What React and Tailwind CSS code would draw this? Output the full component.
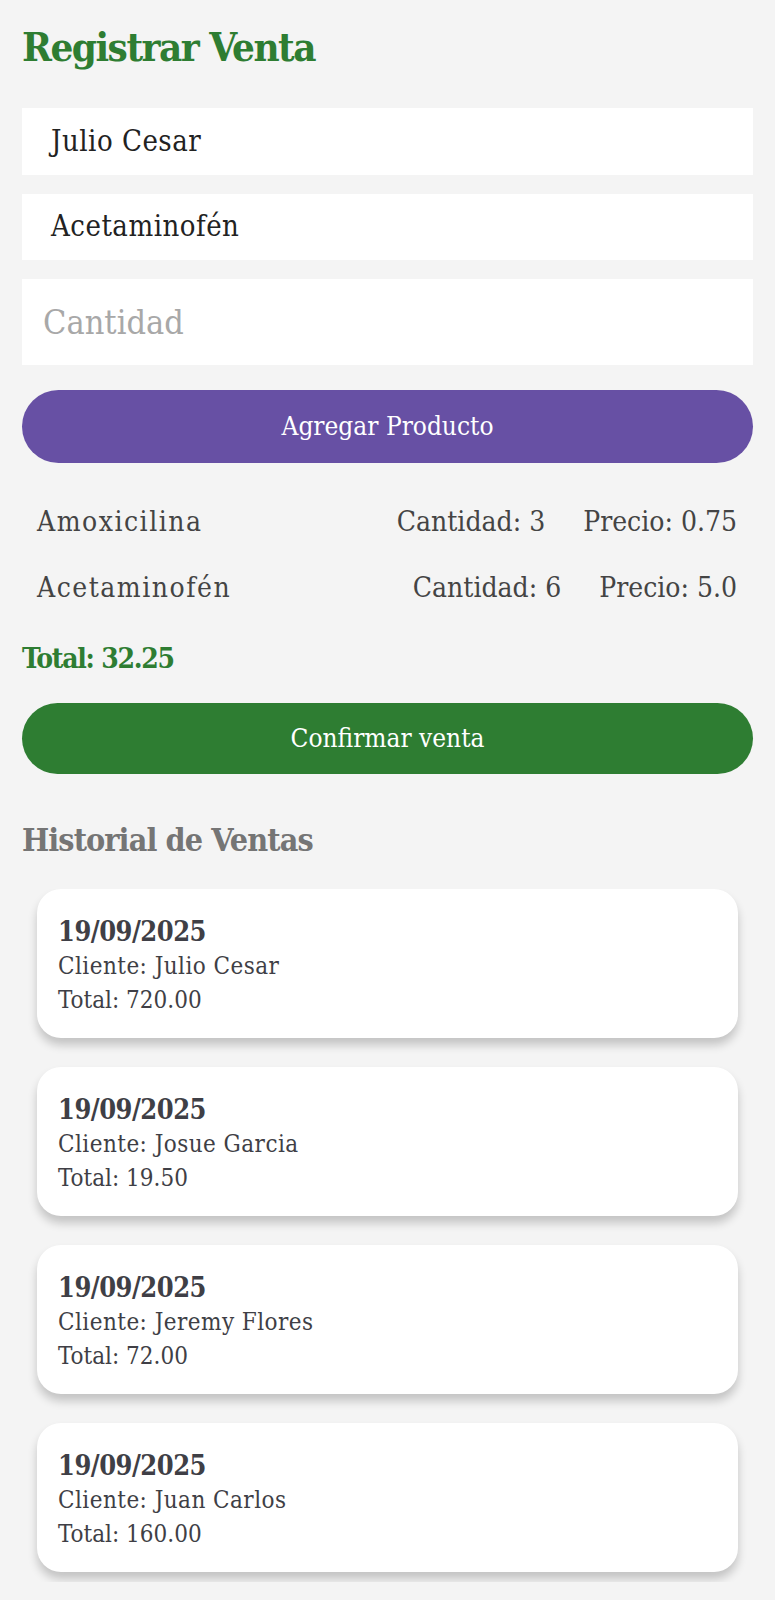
export default function App() {
  const products = [
    { name: "Amoxicilina", qty: 3, price: "0.75" },
    { name: "Acetaminofén", qty: 6, price: "5.0" },
  ];
  const sales = [
    { date: "19/09/2025", client: "Julio Cesar", total: "720.00" },
    { date: "19/09/2025", client: "Josue Garcia", total: "19.50" },
    { date: "19/09/2025", client: "Jeremy Flores", total: "72.00" },
    { date: "19/09/2025", client: "Juan Carlos", total: "160.00" },
  ];
  return (
    <div
      className="bg-[#f4f4f4] min-h-[1600px] px-[22px] pt-[22px] font-stretch-condensed"
      style={{ fontFamily: '"DejaVu Serif", "Liberation Serif", serif' }}
    >
      <h1 className="text-[40px] leading-[50px] font-bold text-[#2e7d32] tracking-[-1.5px]">
        Registrar Venta
      </h1>
      <div className="mt-[36px] h-[67px] bg-white flex items-center pl-[29px] text-[29px] text-[#222] tracking-[0.5px]">
        Julio Cesar
      </div>
      <div className="mt-[19px] h-[66px] bg-white flex items-center pl-[29px] text-[29px] text-[#222] tracking-[0.5px]">
        Acetaminofén
      </div>
      <div className="mt-[19px] h-[86px] bg-white flex items-center pl-[21px] text-[34px] text-[#a8a8a8]">
        Cantidad
      </div>
      <div className="mt-[25px] h-[73px] rounded-full bg-[#6750a4] flex items-center justify-center text-white text-[26px]">
        Agregar Producto
      </div>
      <div className="mt-[26px]">
        {products.map((p) => (
          <div key={p.name} className="h-[66px] flex items-center pl-[15px] pr-[16px] text-[28px] text-[#444]">
            <span className="flex-1 tracking-[1.5px]">{p.name}</span>
            <span>Cantidad: {p.qty}</span>
            <span className="ml-[38px]">Precio: {p.price}</span>
          </div>
        ))}
      </div>
      <div className="mt-[18px] h-[40px] flex items-center text-[28px] font-bold text-[#2e7d32] tracking-[-1.25px]">
        Total: 32.25
      </div>
      <div className="mt-[24px] h-[71px] rounded-full bg-[#2e7d32] flex items-center justify-center text-white text-[26px]">
        Confirmar venta
      </div>
      <div className="mt-[46px] h-[40px] flex items-center text-[32px] font-bold text-[#757575] tracking-[-0.9px]">
        Historial de Ventas
      </div>
      <div className="mt-[29px] h-[693px] overflow-hidden px-[15px] flex flex-col gap-[29px]">
        {sales.map((s, i) => (
          <div
            key={i}
            className="h-[149px] shrink-0 bg-white rounded-[24px] shadow-[0_7px_10px_rgba(0,0,0,0.2)] pt-[26px] px-[21px] text-[#3f3f46]"
          >
            <div className="h-[34px] flex items-center text-[27px] font-bold tracking-[-0.5px]">{s.date}</div>
            <div className="h-[34px] flex items-center text-[24px] tracking-[0.45px]">Cliente: {s.client}</div>
            <div className="h-[33px] flex items-center text-[24px]">Total: {s.total}</div>
          </div>
        ))}
      </div>
    </div>
  );
}
